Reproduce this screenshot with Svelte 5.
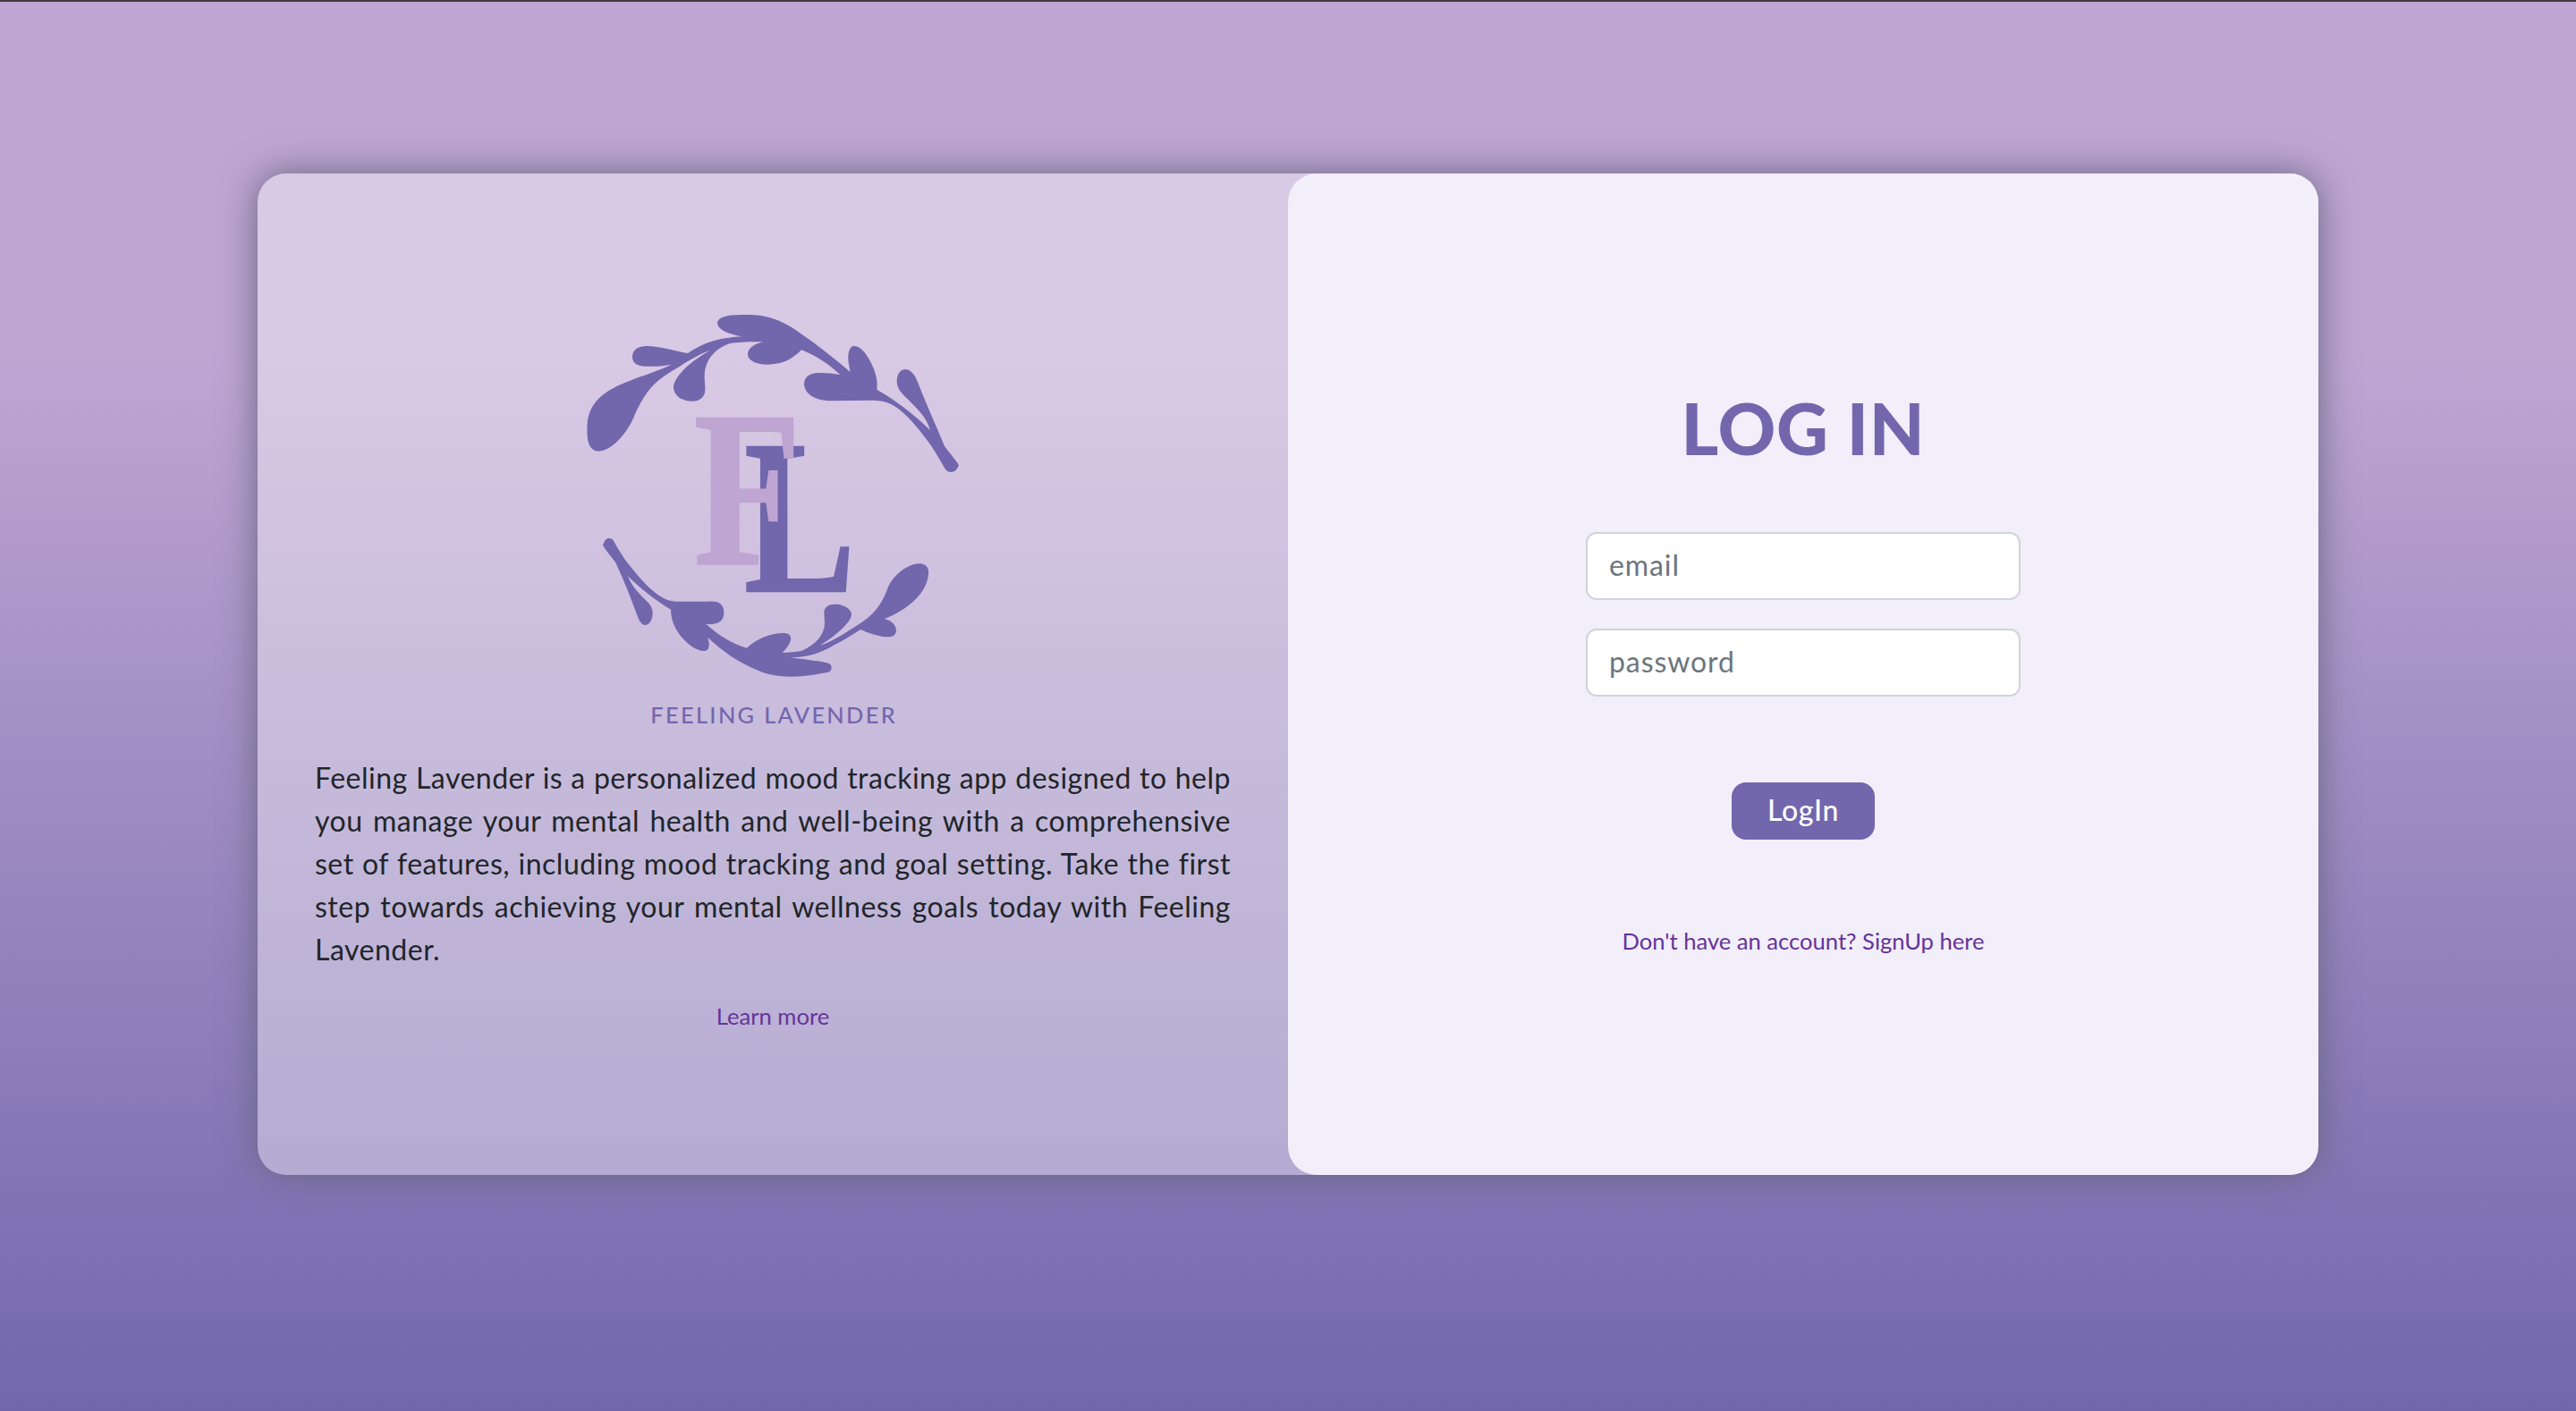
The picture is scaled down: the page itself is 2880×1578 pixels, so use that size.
<script>
  const about = [
    'Feeling Lavender is a personalized mood tracking app designed to help',
    'you manage your mental health and well-being with a comprehensive',
    'set of features, including mood tracking and goal setting. Take the first',
    'step towards achieving your mental wellness goals today with Feeling',
    'Lavender.'
  ];
  let email = $state('');
  let password = $state('');
</script>

<div class="page">
  <main class="card">
    <section class="intro">
      <svg class="logo" viewBox="0 0 1344 1470" role="img" aria-label="Feeling Lavender">
        <path
          class="ink"
          d="M50 430C56 370 90 335 150 305C210 277 270 262 332 233C290 240 270 240 245 239C215 238 201 228 201 207C202 182 222 171 250 171C300 172 340 188 387 195C440 162 480 144 572 139C525 133 486 115 486 93C488 75 515 66 570 66C610 66 630 67 650 73C690 82 725 100 760 125C820 165 875 210 932 258C928 235 925 225 925 215C924 187 932 171 945 171C962 171 980 188 995 215C1016 252 1025 285 1021 317C1080 350 1140 396 1200 453C1185 405 1155 380 1120 345C1098 324 1088 308 1088 287C1089 264 1100 249 1117 249C1134 250 1147 264 1155 285C1177 340 1200 395 1220 440L1248 507C1265 530 1282 548 1296 571C1291 584 1284 594 1270 594C1258 594 1253 588 1248 580C1225 540 1205 505 1180 475C1160 447 1140 425 1120 405C1085 370 1060 355 1010 353L870 355C815 355 777 332 777 297C778 275 795 262 825 261C850 260 870 263 898 267C860 232 815 202 768 184C735 218 700 233 655 233C612 233 588 218 588 198C589 180 605 166 639 157C590 156 560 158 530 162C505 168 441 200 443 278L445 310C447 340 430 356 400 356C365 356 339 335 339 308C342 270 400 220 460 187C425 197 370 233 330 257C280 288 245 320 210 400C185 465 130 524 88 524C55 522 46 490 50 430Z"
        />
        <path
          class="ink"
          d="M102 839C107 826 112 816 122 816C132 816 136 820 140 828C155 855 170 880 190 905C220 943 245 970 270 992C300 1018 325 1028 350 1028L455 1028C485 1025 508 1032 508 1065C508 1092 492 1107 448 1104C490 1142 535 1170 585 1184C615 1155 660 1134 710 1134C744 1136 738 1166 704 1200C725 1198 748 1198 770 1193C815 1172 846 1140 846 1100L844 1065C845 1047 858 1037 882 1037C910 1038 936 1053 936 1072C934 1100 880 1145 830 1176C875 1162 920 1130 960 1105C1000 1080 1035 1045 1055 990C1068 945 1120 901 1165 901C1187 903 1196 915 1194 935C1190 1000 1125 1055 1046 1087C1072 1090 1086 1110 1086 1126C1085 1140 1075 1147 1060 1147C1030 1147 995 1135 966 1122C930 1145 910 1158 880 1173C830 1203 790 1214 732 1216C770 1222 815 1226 850 1233C863 1236 869 1240 869 1250C869 1260 862 1265 850 1267C810 1274 780 1280 740 1280C680 1281 640 1272 580 1240C530 1214 490 1182 453 1148C458 1160 459 1170 458 1176C457 1188 451 1194 440 1194C400 1192 330 1130 330 1055C280 1025 225 983 186 943C200 980 225 1003 252 1030C264 1043 269 1052 269 1068C268 1092 257 1107 244 1107C232 1106 225 1094 220 1082L190 1003C175 965 160 930 144 896C130 877 114 860 102 839Z"
        />
        <text class="monogram ink" transform="translate(576 992) scale(.745 .988)">L</text>
        <text class="monogram pale" transform="translate(407 903) scale(.785 .988)">F</text>
        <text class="brand ink" x="262" y="1436" textLength="820" lengthAdjust="spacing">FEELING LAVENDER</text>
      </svg>
      <p class="about">
        {#each about as line}<span>{line}</span>{/each}
      </p>
      <a class="link" href="#about">Learn more</a>
    </section>

    <section class="login">
      <h1>LOG IN</h1>
      <form>
        <input type="email" placeholder="email" bind:value={email} />
        <input type="password" placeholder="password" bind:value={password} />
        <button type="button">LogIn</button>
      </form>
      <a class="link signup" href="#signup">Don't have an account? SignUp here</a>
    </section>
  </main>
</div>

<style>
  :global(body) {
    margin: 0;
  }
  .page {
    box-sizing: border-box;
    height: 1578px;
    padding: 192px 288px 0;
    border-top: 2px solid #3f3b40;
    background: linear-gradient(#bfa5d2 25%, #7267ad 100%);
    font-family: Lato, 'Noto Sans', sans-serif;
    font-size: 32px;
    color: #212529;
  }
  .card {
    display: grid;
    grid-template-columns: 1fr 1fr;
    height: 1120px;
    border-radius: 32px;
    background: rgba(255, 255, 255, 0.4);
    box-shadow: 0 0 40px #666680;
  }
  .intro {
    display: flex;
    flex-direction: column;
    align-items: center;
    padding: 136px 64px 0;
  }
  .logo {
    width: 448px;
    height: 490px;
  }
  .ink {
    fill: #7267ad;
    stroke: #7267ad;
    stroke-width: 0;
  }
  .pale {
    fill: #bfa5d2;
    stroke: #bfa5d2;
  }
  .monogram {
    font: 700 750px 'Liberation Serif', serif;
    stroke-width: 7px;
  }
  .brand {
    font: 500 76px Lato, sans-serif;
  }
  .about {
    align-self: stretch;
    margin: 26px 0 0;
    line-height: 48px;
    letter-spacing: 0.5px;
  }
  .about span {
    display: block;
    white-space: nowrap;
    text-align-last: justify;
  }
  .about span:last-child {
    text-align-last: left;
  }
  .link {
    margin-top: 31px;
    font-size: 25.6px;
    line-height: 38px;
    color: #663399;
    text-decoration: none;
  }
  .login {
    display: flex;
    flex-direction: column;
    align-items: center;
    border-radius: 32px;
    background: #f2eefa;
  }
  h1 {
    margin: 236px 0 0;
    font-size: 80px;
    font-weight: 900;
    line-height: 96px;
    letter-spacing: 0.8px;
    color: #7267ad;
  }
  form {
    display: flex;
    flex-direction: column;
    align-items: center;
    gap: 32px;
    margin-top: 69px;
  }
  input {
    box-sizing: border-box;
    width: 486px;
    height: 76px;
    padding: 10px 24px 14px;
    border: 2px solid #ced4da;
    border-radius: 12px;
    background: #fff;
    font: inherit;
    letter-spacing: 0.9px;
  }
  input::placeholder {
    color: #6c757d;
    opacity: 1;
  }
  button {
    width: 160px;
    height: 64px;
    margin-top: 64px;
    padding: 0 0 3px;
    border: 0;
    border-radius: 16px;
    background: #7267ad;
    color: #fff;
    font: inherit;
    font-weight: 500;
    letter-spacing: 0.7px;
  }
  .signup {
    margin-top: 94px;
  }
</style>
